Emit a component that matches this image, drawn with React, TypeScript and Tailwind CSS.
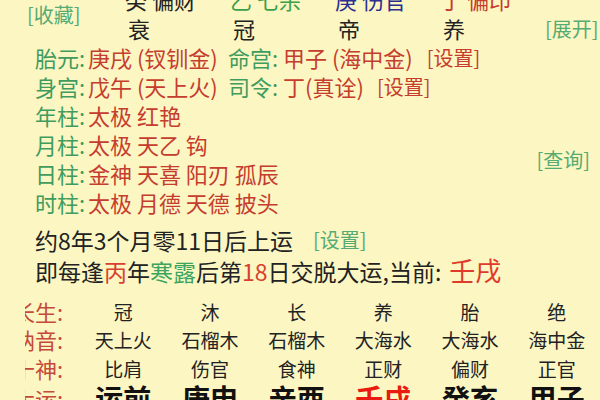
const green = 'text-[#3f9c5e]'
const red = 'text-[#c53d2e]'

const stems = [
  { text: '癸 偏财', color: 'text-[#222222]' },
  { text: '乙 七杀', color: 'text-[#3aa04a]' },
  { text: '庚 伤官', color: 'text-[#2b2f8f]' },
  { text: '丁 偏印', color: 'text-[#c53d2e]' },
]
const stages = ['衰', '冠', '帝', '养']

const shensha = [
  { label: '年柱:', value: '太极 红艳' },
  { label: '月柱:', value: '太极 天乙 钩' },
  { label: '日柱:', value: '金神 天喜 阳刃 孤辰' },
  { label: '时柱:', value: '太极 月德 天德 披头' },
]

const table = [
  { label: '长生:', cells: ['冠', '沐', '长', '养', '胎', '绝'] },
  { label: '纳音:', cells: ['天上火', '石榴木', '石榴木', '大海水', '大海水', '海中金'] },
  { label: '十神:', cells: ['比肩', '伤官', '食神', '正财', '偏财', '正官'] },
]
const dayun = ['运前', '庚申', '辛酉', '壬戌', '癸亥', '甲子']

function TableLabel({ text }: { text: string }) {
  return (
    <div className="w-[80px] shrink-0 pl-[25px]">
      <div className="w-[38px] overflow-hidden flex justify-end">
        <span className="whitespace-nowrap text-[22px] text-[#c54a3a]">{text}</span>
      </div>
    </div>
  )
}

export default function App() {
  return (
    <div className="w-[600px] h-[400px] overflow-hidden bg-[#fcf6c3] text-[22px] leading-[29px] text-[#222222] font-['Noto_Sans_CJK_SC','Noto_Sans',sans-serif]">
      <div className="-mt-[15px] flex">
        <div className="w-[125px] shrink-0 flex items-center pl-[27px]">
          <span className="text-[20px] text-[#55ab72]">[收藏]</span>
        </div>
        <div className="flex-1">
          <div className="flex whitespace-nowrap">
            {stems.map((s) => (
              <span key={s.text} className={`w-[105px] ${s.color}`}>{s.text}</span>
            ))}
          </div>
          <div className="flex whitespace-nowrap">
            {stages.map((s, i) => (
              <span key={i} className="w-[105px] pl-[3px]">{s}</span>
            ))}
            <span className="ml-auto pr-[10px] text-[20px] text-[#55ab72]">[展开]</span>
          </div>
        </div>
      </div>

      <div className="pl-[35px] whitespace-nowrap">
        <div className="flex">
          <span className={`w-[53px] ${green}`}>胎元:</span>
          <span className={`w-[140px] ${red}`}>庚戌 (钗钏金)</span>
          <span className={`w-[55px] ${green}`}>命宫:</span>
          <span className={red}>甲子 (海中金)</span>
          <span className={`ml-[14px] text-[20px] ${red}`}>[设置]</span>
        </div>
        <div className="flex">
          <span className={`w-[53px] ${green}`}>身宫:</span>
          <span className={`w-[140px] ${red}`}>戊午 (天上火)</span>
          <span className={`w-[55px] ${green}`}>司令:</span>
          <span className={red}>丁(真诠)</span>
          <span className={`ml-[13px] text-[20px] ${red}`}>[设置]</span>
        </div>
        <div className="flex">
          <div className="flex flex-col">
            {shensha.map((r) => (
              <div key={r.label} className="flex">
                <span className={`w-[53px] ${green}`}>{r.label}</span>
                <span className={red}>{r.value}</span>
              </div>
            ))}
          </div>
          <div className="ml-auto pr-[10px] flex items-center">
            <span className="text-[20px] text-[#55ab72]">[查询]</span>
          </div>
        </div>

        <div className="mt-[8px] leading-[30px] flex items-center">
          <span className="text-[23px]">约8年3个月零11日后上运</span>
          <span className="ml-[20px] text-[20px] text-[#55ab72]">[设置]</span>
        </div>
        <div className="leading-[30px] text-[23px] flex items-baseline">
          <span>
            即每逢<span className="text-[#d8402f]">丙</span>年<span className="text-[#3aa55e]">寒露</span>后第<span className="text-[#d8402f]">18</span>日交脱大运,当前:
          </span>
          <span className="ml-[8px] text-[26px] text-[#e03a2c]">壬戌</span>
        </div>
      </div>

      <div className="mt-[11px]">
        {table.map((row) => (
          <div key={row.label} className="flex items-center h-[28.5px]">
            <TableLabel text={row.label} />
            {row.cells.map((c, i) => (
              <span key={i} className="w-[87px] text-center text-[19px] whitespace-nowrap">{c}</span>
            ))}
          </div>
        ))}
        <div className="flex items-center h-[32px]">
          <TableLabel text="大运:" />
          {dayun.map((c) => (
            <span
              key={c}
              className={`w-[87px] text-center text-[28px] font-bold whitespace-nowrap ${c === '壬戌' ? 'text-[#ea1a10]' : 'text-[#111111]'}`}
            >
              {c}
            </span>
          ))}
        </div>
      </div>
    </div>
  )
}
